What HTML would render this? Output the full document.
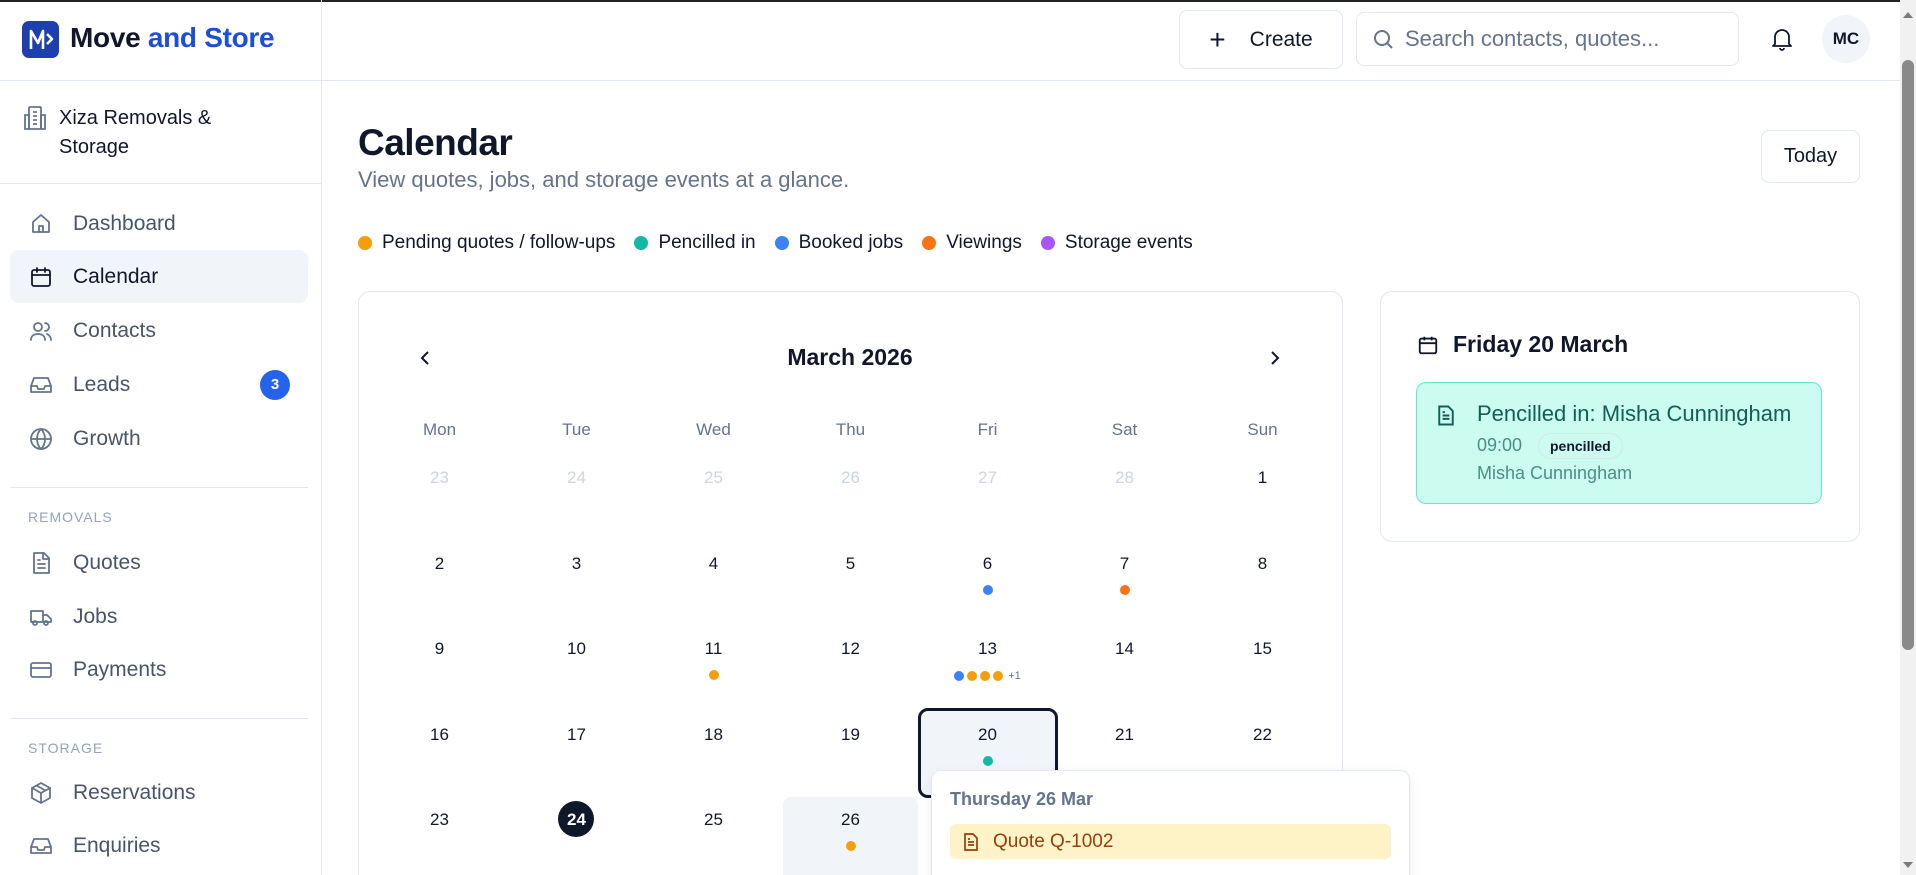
<!DOCTYPE html>
<html><head><meta charset="utf-8"><style>
*{box-sizing:border-box;margin:0;padding:0}
html,body{width:1916px;height:875px;overflow:hidden}
body{background:#fff;font-family:"Liberation Sans",sans-serif;color:#0f172a}
#root{position:relative;width:1916px;height:875px;overflow:hidden}
.a{position:absolute}
.nav{position:absolute;left:10px;width:298px;height:53px;display:flex;align-items:center;padding-left:19px;font-size:21px;color:#475569;border-radius:9px}
.nav svg{width:24px;height:24px;margin-right:20px;fill:none;stroke:#64748b;stroke-width:1.8;stroke-linecap:round;stroke-linejoin:round}
.sec{position:absolute;left:28px;font-size:14px;color:#94a3b8;letter-spacing:1px}
.hr{position:absolute;left:10px;width:298px;height:1px;background:#e2e8f0}
.wd{position:absolute;width:137px;text-align:center;font-size:17px;color:#64748b}
.dn{position:absolute;width:137px;text-align:center;font-size:17px;color:#0f172a}
.dots{position:absolute;width:137px;display:flex;justify-content:center;align-items:center;gap:3px;font-size:11px;color:#64748b}
.dot{width:10px;height:10px;border-radius:50%;display:inline-block}
.lg{display:flex;align-items:center;margin-right:19px}
.lg i{width:14px;height:14px;border-radius:50%;margin-right:10px;display:inline-block}
</style></head><body><div id="root">
<div class="a" style="left:0;top:0;width:1900px;height:2px;background:#222"></div>
<div class="a" style="left:321px;top:0;width:1px;height:875px;background:#e2e8f0"></div>
<div class="a" style="left:0;top:80px;width:1900px;height:1px;background:#e2e8f0"></div>
<div class="a" style="left:22px;top:21px;width:37px;height:37px;background:#1e40af;border-radius:7px">
<svg width="37" height="37" viewBox="0 0 37 37" fill="none" stroke="#fff" stroke-width="2.6" stroke-linejoin="round"><path d="M9 28V10l7 12 5-12v18"/><path d="M25 13l5 5-5 5"/></svg></div>
<div class="a" style="left:70px;top:22px;font-size:28px;font-weight:bold;letter-spacing:-0.3px">Move <span style="color:#1d4ed8">and Store</span></div>
<svg class="a" style="left:23px;top:105px" width="24" height="26" viewBox="0 0 24 26" fill="none" stroke="#64748b" stroke-width="1.8"><rect x="6" y="2" width="12" height="22" rx="1"/><path d="M2 10h4v14H2zM18 10h4v14h-4zM10 7h4M10 11h4M10 15h4M10 19h4"/></svg>
<div class="a" style="left:59px;top:104px;font-size:20px;line-height:29px;color:#0f172a">Xiza Removals &amp;<br>Storage</div>
<div class="a" style="left:0;top:183px;width:321px;height:1px;background:#e2e8f0"></div>
<div class="nav" style="top:197px"><svg viewBox="0 0 24 24"><path d="M4 10l8-7 8 7v10H4z"/><path d="M10 20v-6h4v6"/></svg>Dashboard</div>
<div class="nav" style="top:250px;background:#f1f5f9;color:#0f172a"><svg viewBox="0 0 24 24" style="stroke:#0f172a"><rect x="3" y="5" width="18" height="16" rx="2"/><path d="M3 10h18M8 3v4M16 3v4"/></svg>Calendar</div>
<div class="nav" style="top:304px"><svg viewBox="0 0 24 24"><circle cx="9" cy="8" r="4"/><path d="M2 21c0-4 3-6 7-6s7 2 7 6M16 4a4 4 0 010 8M18 15c2 1 4 3 4 6"/></svg>Contacts</div>
<div class="nav" style="top:358px"><svg viewBox="0 0 24 24"><path d="M2 13l3-8h14l3 8v6H2z"/><path d="M2 13h6l1 3h6l1-3h6"/></svg>Leads</div>
<div class="a" style="left:260px;top:370px;width:30px;height:30px;border-radius:50%;background:#2563eb;color:#fff;font-size:15px;font-weight:bold;text-align:center;line-height:30px">3</div>
<div class="nav" style="top:412px"><svg viewBox="0 0 24 24"><circle cx="12" cy="12" r="10"/><path d="M2 12h20M12 2c3 3 4 7 4 10s-1 7-4 10c-3-3-4-7-4-10s1-7 4-10"/></svg>Growth</div>
<div class="hr" style="top:487px"></div>
<div class="sec" style="top:509px">REMOVALS</div>
<div class="nav" style="top:536px"><svg viewBox="0 0 24 24"><path d="M5 2h10l5 5v15H5z"/><path d="M14 2v6h6M9 13h7M9 17h7M9 9h2"/></svg>Quotes</div>
<div class="nav" style="top:590px"><svg viewBox="0 0 24 24"><path d="M2 6h12v11H2zM14 10h4l4 4v3h-8"/><circle cx="6" cy="18" r="2"/><circle cx="17" cy="18" r="2"/></svg>Jobs</div>
<div class="nav" style="top:643px"><svg viewBox="0 0 24 24"><rect x="2" y="5" width="20" height="14" rx="2"/><path d="M2 10h20"/></svg>Payments</div>
<div class="hr" style="top:718px"></div>
<div class="sec" style="top:740px">STORAGE</div>
<div class="nav" style="top:766px"><svg viewBox="0 0 24 24"><path d="M12 2l9 5v10l-9 5-9-5V7z"/><path d="M3 7l9 5 9-5M12 12v10M7.5 4.5l9 5"/></svg>Reservations</div>
<div class="nav" style="top:819px"><svg viewBox="0 0 24 24"><path d="M2 13l3-8h14l3 8v6H2z"/><path d="M2 13h6l1 3h6l1-3h6"/></svg>Enquiries</div>
<div class="a" style="left:1179px;top:10px;width:164px;height:59px;border:1px solid #e2e8f0;border-radius:8px;display:flex;align-items:center;justify-content:center;font-size:21px;gap:24px"><span style="font-size:28px;font-weight:300">+</span>Create</div>
<div class="a" style="left:1356px;top:12px;width:383px;height:54px;border:1px solid #e2e8f0;border-radius:8px;display:flex;align-items:center;padding-left:14px;font-size:22px;color:#64748b">
<svg width="24" height="24" viewBox="0 0 24 24" fill="none" stroke="#64748b" stroke-width="2"><circle cx="11" cy="11" r="7"/><path d="M16 16l5 5"/></svg><span style="margin-left:10px">Search contacts, quotes...</span></div>
<svg class="a" style="left:1771px;top:27px" width="22" height="24" viewBox="0 0 22 24" fill="none" stroke="#0f172a" stroke-width="1.8" stroke-linejoin="round"><path d="M4 17V10a7 7 0 0114 0v7l2 2H2z"/><path d="M9 21a2 2 0 004 0"/></svg>
<div class="a" style="left:1822px;top:15px;width:48px;height:48px;border-radius:50%;background:#f1f5f9;text-align:center;line-height:48px;font-size:17px;font-weight:bold">MC</div>
<div class="a" style="left:1900px;top:0;width:16px;height:875px;background:#f1f1f1"></div>
<div class="a" style="left:1902px;top:60px;width:12px;height:590px;background:#8a8a8a;border-radius:6px"></div>
<div class="a" style="left:1903px;top:12px;width:0;height:0;border-left:5px solid transparent;border-right:5px solid transparent;border-bottom:6px solid #7a7a7a"></div>
<div class="a" style="left:1903px;top:862px;width:0;height:0;border-left:5px solid transparent;border-right:5px solid transparent;border-top:6px solid #7a7a7a"></div>
<div class="a" style="left:358px;top:122px;font-size:37px;font-weight:bold;letter-spacing:-0.5px">Calendar</div>
<div class="a" style="left:358px;top:167px;font-size:22px;color:#64748b">View quotes, jobs, and storage events at a glance.</div>
<div class="a" style="left:1761px;top:130px;width:99px;height:53px;border:1px solid #e2e8f0;border-radius:8px;text-align:center;line-height:51px;font-size:20px">Today</div>
<div class="a" style="left:358px;top:232px;display:flex;font-size:19px">
<div class="lg"><i style="background:#f59e0b"></i>Pending quotes / follow-ups</div>
<div class="lg"><i style="background:#14b8a6"></i>Pencilled in</div>
<div class="lg"><i style="background:#3b82f6"></i>Booked jobs</div>
<div class="lg"><i style="background:#f97316"></i>Viewings</div>
<div class="lg"><i style="background:#a855f7"></i>Storage events</div>
</div>
<div class="a" style="left:358px;top:291px;width:985px;height:620px;border:1px solid #e2e8f0;border-radius:12px"></div>
<svg class="a" style="left:417px;top:349px" width="16" height="18" viewBox="0 0 16 18" fill="none" stroke="#0f172a" stroke-width="2"><path d="M11 3L5 9l6 6"/></svg>
<svg class="a" style="left:1267px;top:349px" width="16" height="18" viewBox="0 0 16 18" fill="none" stroke="#0f172a" stroke-width="2"><path d="M5 3l6 6-6 6"/></svg>
<div class="a" style="left:700px;top:344px;width:300px;text-align:center;font-size:23px;font-weight:bold">March 2026</div>
<div class="a" style="left:783px;top:797px;width:135px;height:100px;background:#f1f5f9;border-radius:8px"></div>
<div class="a" style="left:918px;top:708px;width:140px;height:90px;background:#f1f5f9;border:3px solid #0f172a;border-radius:10px"></div>
<div class="a" style="left:558px;top:801px;width:36px;height:36px;border-radius:50%;background:#0f172a"></div>
<div id="grid"></div>
<div class="a" style="left:931px;top:770px;width:479px;height:130px;background:#fff;border:1px solid #e2e8f0;border-radius:10px;box-shadow:0 4px 12px rgba(0,0,0,.08)"></div>
<div class="a" style="left:950px;top:789px;font-size:18px;font-weight:bold;color:#64748b">Thursday 26 Mar</div>
<div class="a" style="left:950px;top:824px;width:441px;height:35px;background:#fef3c7;border-radius:6px;display:flex;align-items:center;padding-left:13px;font-size:19px;color:#92400e">
<svg width="16" height="18" viewBox="0 0 16 18" fill="none" stroke="#92400e" stroke-width="1.7"><path d="M2 1h8l4 4v12H2z"/><path d="M5 9h6M5 12h6M5 6h2"/></svg><span style="margin-left:14px">Quote Q-1002</span></div>
<div class="a" style="left:1380px;top:291px;width:480px;height:251px;border:1px solid #e2e8f0;border-radius:12px"></div>
<svg class="a" style="left:1417px;top:334px" width="22" height="22" viewBox="0 0 24 24" fill="none" stroke="#0f172a" stroke-width="2"><rect x="3" y="5" width="18" height="16" rx="2"/><path d="M3 10h18M8 3v4M16 3v4"/></svg>
<div class="a" style="left:1453px;top:331px;font-size:23px;font-weight:bold">Friday 20 March</div>
<div class="a" style="left:1416px;top:382px;width:406px;height:122px;background:#ccfbef;border:1px solid #5eead4;border-radius:10px"></div>
<svg class="a" style="left:1437px;top:405px" width="18" height="21" viewBox="0 0 16 18" fill="none" stroke="#115e59" stroke-width="1.7"><path d="M2 1h8l4 4v12H2z"/><path d="M5 9h6M5 12h6M5 6h2"/></svg>
<div class="a" style="left:1477px;top:401px;font-size:22px;color:#115e59">Pencilled in: Misha Cunningham</div>
<div class="a" style="left:1477px;top:435px;font-size:18px;color:#4b8f85">09:00</div>
<div class="a" style="left:1538px;top:433px;height:26px;padding:0 11px;border:1px solid #d9e6e2;border-radius:13px;font-size:14px;font-weight:bold;line-height:24px;color:#0f172a">pencilled</div>
<div class="a" style="left:1477px;top:463px;font-size:18px;color:#4b8f85">Misha Cunningham</div>
<script>
var cx=[439,576,713,850,987,1124,1262],wd=["Mon","Tue","Wed","Thu","Fri","Sat","Sun"],h="";
for(var i=0;i<7;i++)h+='<div class="wd" style="left:'+(cx[i]-68)+'px;top:420px">'+wd[i]+'</div>';
var ry=[468,554,639,725,810];
var days=[[23,24,25,26,27,28,1],[2,3,4,5,6,7,8],[9,10,11,12,13,14,15],[16,17,18,19,20,21,22],[23,24,25,26,27,28,29]];
for(var r=0;r<5;r++)for(var c=0;c<7;c++){var col=(r==0&&c<6)?'#cbd5e1':(r==4&&c==1?'#fff;font-weight:bold':'#0f172a');h+='<div class="dn" style="left:'+(cx[c]-68)+'px;top:'+ry[r]+'px;color:'+col+'">'+days[r][c]+'</div>';}
function d(r,c,cols,extra){var s='<div class="dots" style="left:'+(cx[c]-68)+'px;top:'+(ry[r]+31)+'px">';cols.forEach(function(k){s+='<span class="dot" style="background:'+k+'"></span>'});if(extra)s+='<span style="margin-left:2px">'+extra+'</span>';h+=s+'</div>';}
d(1,4,['#3b82f6']);d(1,5,['#f97316']);d(2,2,['#f59e0b']);d(2,4,['#3b82f6','#f59e0b','#f59e0b','#f59e0b'],'+1');d(3,4,['#14b8a6']);d(4,3,['#f59e0b']);
document.getElementById('grid').innerHTML=h;
</script>
</div></body></html>
